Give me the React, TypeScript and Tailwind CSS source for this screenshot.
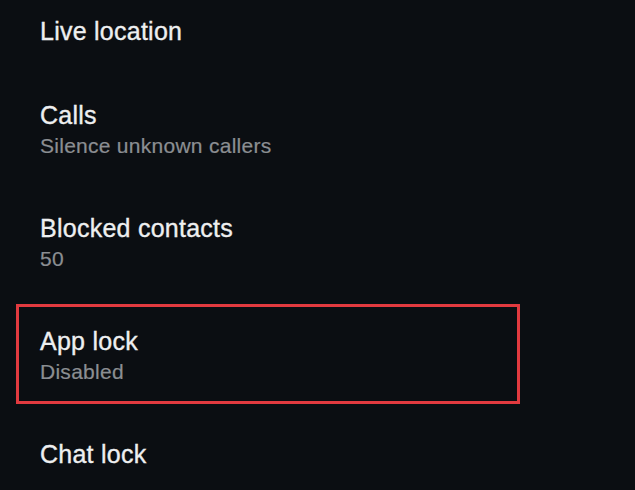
import React from 'react'

interface SettingRowProps {
  title: string
  subtitle?: string
  highlighted?: boolean
}

function SettingRow({ title, subtitle, highlighted }: SettingRowProps) {
  return (
    <div
      className={`relative flex flex-col justify-center pl-[40px] ${subtitle ? 'h-[113px]' : 'h-[84px]'}`}
    >
      <p className="text-[25px] leading-[30px] tracking-[0.25px] text-[#eeeff0] [-webkit-text-stroke:0.35px_#eeeff0]">
        {title}
      </p>
      {subtitle && (
        <p className="mt-[1px] text-[21px] leading-[29px] tracking-[0.27px] text-[#8b8e92] [-webkit-text-stroke:0.2px_#8b8e92]">
          {subtitle}
        </p>
      )}

      {/* annotation box */}
      {highlighted && (
        <div className="pointer-events-none absolute left-[16px] top-[5px] h-[100px] w-[504px] border-[3px] border-[#e23a3f]" />
      )}
    </div>
  )
}

export default function App() {
  return (
    <div
      className="h-[490px] w-[635px] overflow-hidden bg-[#0b0e12]"
      style={{ fontFamily: '"Liberation Sans", Arial, sans-serif' }}
    >
      <div className="-mt-[11px]">
        <SettingRow title="Live location" />
        <SettingRow title="Calls" subtitle="Silence unknown callers" />
        <SettingRow title="Blocked contacts" subtitle="50" />
        <SettingRow title="App lock" subtitle="Disabled" highlighted />
        <SettingRow title="Chat lock" />
      </div>
    </div>
  )
}
